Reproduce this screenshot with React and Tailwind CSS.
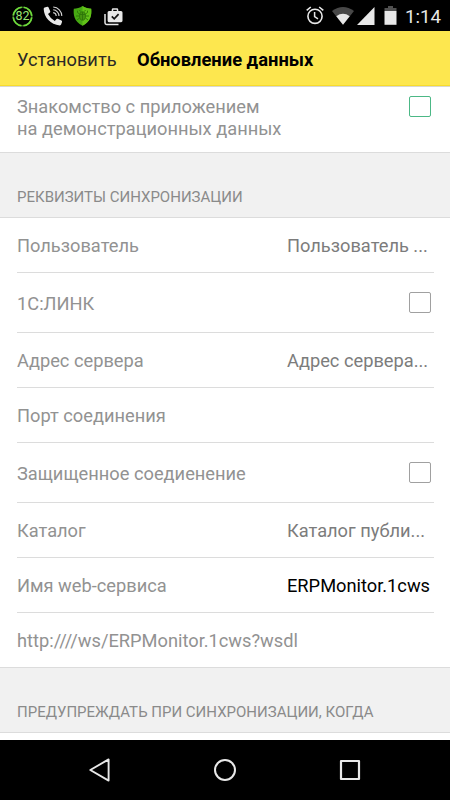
import React from 'react'

const rows = [
  { label: 'Пользователь', value: 'Пользователь ...' },
  { label: '1С:ЛИНК', checkbox: true },
  { label: 'Адрес сервера', value: 'Адрес сервера...' },
  { label: 'Порт соединения' },
  { label: 'Защищенное соедиенение', checkbox: true },
  { label: 'Каталог', value: 'Каталог публи...' },
  { label: 'Имя web-сервиса', value: 'ERPMonitor.1cws', filled: true },
]

const BatteryRing = () => (
  <div className="relative w-[21px] h-[21px] mt-px flex items-center justify-center">
    <svg viewBox="0 0 21 21" className="absolute inset-0" fill="none">
      <circle cx="10.5" cy="10.5" r="9.3" stroke="#2f5a1c" strokeWidth="1.6" />
      <circle
        cx="10.5"
        cy="10.5"
        r="9.3"
        stroke="#6fdc3c"
        strokeWidth="1.7"
        strokeDasharray="12.6 2"
        strokeDashoffset="-1"
      />
    </svg>
    <span className="relative text-[12.5px] leading-none text-[#9be674]">82</span>
  </div>
)

const Phone = () => (
  <svg viewBox="0 0 20 20" className="w-5 h-5" fill="none">
    <path
      d="M1.6 1.6 L4.3 .7 Q5.2 .5 5.6 1.4 L7.2 5.2 Q7.5 6 6.9 6.5 L5 8.1 Q7.4 12.7 11.8 15 L13.5 13.1 Q14 12.5 14.8 12.8 L18.4 14.6 Q19.3 15.1 19 16 L18.1 18.6 Q17.7 19.5 16.8 19.4 C7.5 18.6 1 11.5 .7 3 Q.7 2 1.6 1.6Z"
      fill="#e8e8e8"
    />
    <g stroke="#d4d4d4" strokeWidth="1.1">
      <path d="M10.2 6.6 A3.4 3.4 0 0 1 13.2 10" />
      <path d="M10.2 3.8 A6.2 6.2 0 0 1 16 10" />
      <path d="M10.2 1 A9 9 0 0 1 18.8 10" />
    </g>
  </svg>
)

const Shield = () => (
  <svg viewBox="0 0 19 20" className="w-[19px] h-5">
    <path
      d="M9.5 0 C7 2 3.5 2.7 .8 2.8 C.3 9 .8 15 9.5 19.8 C18.2 15 18.7 9 18.2 2.8 C15.5 2.7 12 2 9.5 0Z"
      fill="#46a812"
    />
    <path d="M9.5 0 C12 2 15.5 2.7 18.2 2.8 C18.7 9 18.2 15 9.5 19.8Z" fill="#62c218" />
    <g stroke="#2c7509" strokeWidth=".9" fill="none">
      <path d="M6.5 8 L4.5 6.5 L4.5 4.7 M12.5 8 L14.5 6.5 V4.7 M6 10 H3 M13 10 H16 M6.5 12 L4 14 M12.5 12 L15 14 M7.5 5.5 L6.5 4 M11.5 5.5 L12.5 4" />
      <ellipse cx="9.5" cy="10" rx="3" ry="4.2" fill="#45940f" />
      <path d="M9.5 6 V14 M6.7 8.5 H12.3" />
    </g>
  </svg>
)

const ShopBag = () => (
  <svg viewBox="0 0 19 18" className="w-[19px] h-[18px]" fill="none">
    <path d="M1 6 V14.8 Q1 16.4 2.6 16.4 H14.5" stroke="#e8e8e8" strokeWidth="1.5" />
    <path
      d="M7.7 3 V1.7 Q7.7 .3 9.1 .3 H12.9 Q14.3 .3 14.3 1.7 V3 H17 Q18.5 3 18.5 4.5 V12.8 Q18.5 14.2 17 14.2 H5 Q3.6 14.2 3.6 12.8 V4.5 Q3.6 3 5 3Z M9.2 3 H12.8 V1.8 H9.2Z"
      fill="#e8e8e8"
      fillRule="evenodd"
    />
    <path d="M7.8 8.4 L10.2 10.8 L14.6 6.2" stroke="#111" strokeWidth="1.7" />
  </svg>
)

const Alarm = () => (
  <svg viewBox="0 0 18 19" className="w-[18px] h-[19px]" fill="none" stroke="#e8e8e8">
    <circle cx="9" cy="10.3" r="7.1" strokeWidth="1.6" />
    <path d="M.7 4.3 L4.8 1 M17.3 4.3 L13.2 1" strokeWidth="1.6" />
    <path d="M8.6 6 V10.7 L12 12.9" strokeWidth="1.5" />
  </svg>
)

const StatusBar = () => (
  <div className="h-[31px] bg-black flex items-center justify-between pl-3 pr-[9px] text-[#e8e8e8]">
    <div className="flex items-center">
      <BatteryRing />
      <div className="ml-2.5">
        <Phone />
      </div>
      <div className="ml-2.5">
        <Shield />
      </div>
      <div className="ml-3 mt-0.5">
        <ShopBag />
      </div>
    </div>
    <div className="flex items-center">
      <Alarm />
      <svg viewBox="0 0 22 18" className="w-[22px] h-[18px] ml-2 mt-px">
        <path d="M11 17.7 L0 4 Q11 -4 22 4Z" fill="#484848" />
        <path d="M11 17.7 L4.3 9.3 Q11 4.4 17.7 9.3Z" fill="#e8e8e8" />
      </svg>
      <svg viewBox="0 0 18 18" className="w-[18px] h-[18px] ml-[3px] mt-px">
        <path d="M0 18 L17.5 0 V18Z" fill="#e8e8e8" />
      </svg>
      <svg viewBox="0 0 13 19" className="w-[13px] h-[19px] ml-[9px]">
        <path d="M4 0 H9 V2 H12.5 V5 H.5 V2 H4Z" fill="#505050" />
        <path d="M.5 5 H12.5 V18.8 H.5Z" fill="#e8e8e8" />
      </svg>
      <span className="w-9 ml-2 mt-[3px] text-[18.7px] leading-none">1:14</span>
    </div>
  </div>
)

const Checkbox = ({ active = false }) => (
  <div
    className={`w-[22px] h-[21px] mr-[3px] rounded-[2px] border ${
      active ? 'mt-px border-[#4cb886]' : 'border-[#a0a0a0]'
    }`}
  />
)

const SectionTitle = ({ children }) => (
  <div className="h-[66px] shrink-0 bg-[#f1f1f1] border-y border-[#dcdcdc] px-[17px] pt-[34px] text-[15px] leading-5 text-[#8a8a8a]">
    {children}
  </div>
)

const Row = ({ label, value, checkbox, filled }) => (
  <div
    className={`flex items-center border-b border-[#dcdcdc] ${
      checkbox ? 'h-[60px]' : 'h-[55px]'
    }`}
  >
    <div className="w-[270px] pt-0.5 text-[#929292]">{label}</div>
    {value && (
      <div
        className={`pt-0.5 whitespace-nowrap ${filled ? 'text-black' : 'text-[#7c7c7c]'}`}
      >
        {value}
      </div>
    )}
    {checkbox && (
      <div className="ml-auto">
        <Checkbox />
      </div>
    )}
  </div>
)

const NavBar = () => (
  <div className="h-[60px] shrink-0 bg-black flex items-center justify-around px-[37px]">
    <svg viewBox="0 0 24 26" className="w-6 h-[26px]" fill="none">
      <path d="M20.6 2.4 V23.6 L2.3 13Z" stroke="#e8e8e8" strokeWidth="1.9" strokeLinejoin="round" />
    </svg>
    <svg viewBox="0 0 24 24" className="w-6 h-6" fill="none">
      <circle cx="12" cy="12" r="10" stroke="#e8e8e8" strokeWidth="2" />
    </svg>
    <svg viewBox="0 0 24 24" className="w-6 h-6" fill="none">
      <rect x="3" y="3" width="18" height="18" stroke="#e8e8e8" strokeWidth="2.2" strokeLinejoin="round" />
    </svg>
  </div>
)

const App = () => {
  return (
    <div className="w-[450px] h-[800px] overflow-hidden flex flex-col bg-white font-['Roboto',sans-serif] text-[18.25px] leading-[22px]">
      <StatusBar />
      <div className="h-[55px] shrink-0 bg-[#fde74f] border-b border-[#f8dc2c] flex items-center px-[17px] pt-[3px]">
        <span className="w-[120px] text-[#2b2926]">Установить</span>
        <span className="font-bold text-[18.35px] text-black">Обновление данных</span>
      </div>
      <div className="h-[66px] shrink-0 border-t border-[#d8d8d0] flex items-start justify-between px-4 pt-2">
        <div className="pl-px pt-px text-[#929292]">
          Знакомство с приложением
          <br />
          на демонстрационных данных
        </div>
        <Checkbox active />
      </div>
      <SectionTitle>РЕКВИЗИТЫ СИНХРОНИЗАЦИИ</SectionTitle>
      <div className="pl-[17px] pr-4">
        {rows.map((row) => (
          <Row key={row.label} {...row} />
        ))}
        <div className="h-[54px] pt-0.5 flex items-center text-[#929292]">
          http:////ws/ERPMonitor.1cws?wsdl
        </div>
      </div>
      <SectionTitle>ПРЕДУПРЕЖДАТЬ ПРИ СИНХРОНИЗАЦИИ, КОГДА</SectionTitle>
      <div className="flex-1 bg-white" />
      <NavBar />
    </div>
  )
}

export default App
